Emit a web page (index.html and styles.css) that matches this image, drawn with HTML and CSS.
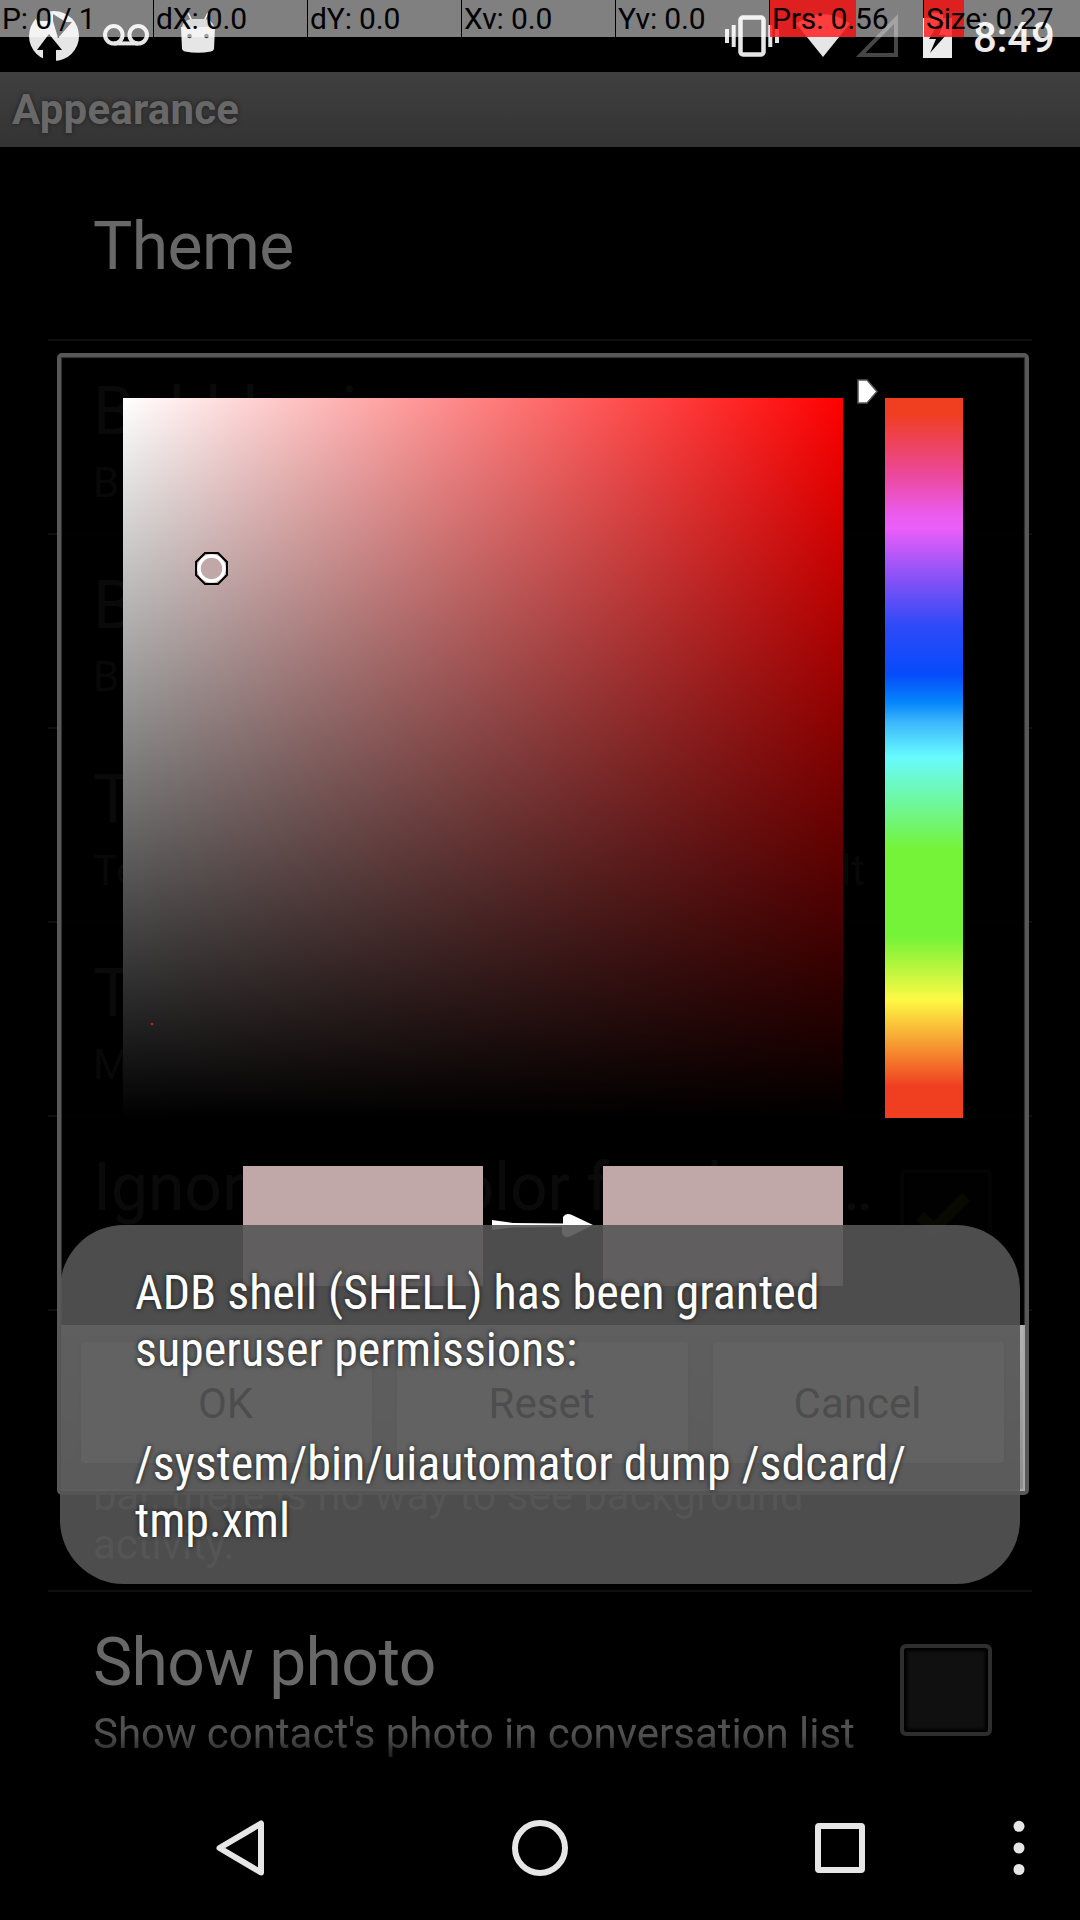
FILE: index.html
```html
<!DOCTYPE html>
<html lang="en">
<head>
<meta charset="utf-8">
<title>Appearance</title>
<link rel="stylesheet" href="styles.css">
</head>
<body>
<div class="screen">
  <header class="status">
    <svg class="ic-recovery" width="50" height="50" viewBox="0 0 50 50"><circle cx="25" cy="25" r="25" fill="#e6e6e6"/><path d="M20 23L33 39H27V50H14V39H8ZM8 10H19V0H13L6 6ZM24 10L29 27L43 11H37L24 3Z" fill="#000"/></svg>
    <svg class="ic-voicemail" width="46" height="22" viewBox="0 0 46 22"><g fill="none" stroke="#e6e6e6" stroke-width="4"><circle cx="10.8" cy="10.8" r="8.8"/><circle cx="35.2" cy="10.8" r="8.8"/><path d="M10.8 19.4H35.2"/></g></svg>
    <svg class="ic-android" width="34" height="42" viewBox="0 0 34 42"><path d="M7 1L11 9M27 1L23 9" stroke="#e6e6e6" stroke-width="1.6"/><path d="M1 15Q3 7 12 7H22Q31 7 33 15Z" fill="#b8b8b8"/><path d="M0 15H34L33 37Q32 39 30 39.500Q17 42 4 39.500Q2 39 1 37Z" fill="#e6e6e6"/><circle cx="8.500" cy="24" r="2.300" fill="#444"/><circle cx="25.500" cy="24" r="2.300" fill="#444"/></svg>
    <span class="spacer"></span>
    <svg class="ic-vibrate" width="54" height="42" viewBox="0 0 54 42"><rect x="15.500" y="2.500" width="23" height="37" rx="2.500" fill="none" stroke="#e6e6e6" stroke-width="4.500"/><path d="M2 14V28M8.700 10V32M45.300 10V32M52 14V28" stroke="#e6e6e6" stroke-width="4"/></svg>
    <svg class="ic-wifi" width="54" height="43" viewBox="0 0 54 43"><path d="M27 43L0 9.500Q27 -9 54 9.500Z" fill="#e6e6e6"/></svg>
    <svg class="ic-signal" width="42" height="43" viewBox="0 0 42 43"><path fill-rule="evenodd" d="M42 0V43H0ZM38 10L9.500 39H38Z" fill="#464646"/></svg>
    <svg class="ic-battery" width="29" height="45" viewBox="0 0 29 45"><path d="M9 0H20V5H29V45H0V5H9Z" fill="#ebebeb"/><path d="M16 9L6 26H13L7 40L23 22H16L21 9Z" fill="#000"/></svg>
    <span class="clock">8:49</span>
  </header>
  <div class="titlebar">Appearance</div>
  <main class="list">
    <section class="row single"><h2>Theme</h2></section>
    <section class="row"><h2>Bubbles in</h2><p>B</p></section>
    <section class="row"><h2>B</h2><p>B</p></section>
    <section class="row"><h2>T</h2><p class="spread"><span>Te</span><span>lt</span></p></section>
    <section class="row"><h2>T</h2><p>M</p></section>
    <section class="row check"><div><h2 class="long">Ignore text color for the c…</h2><p>Ignore text color out of the</p></div>
      <span class="box"><svg width="60" height="48" viewBox="0 0 60 48"><path d="M4 25L18 38L50 6" fill="none" stroke="#55660c" stroke-width="11"/></svg></span></section>
    <section class="row tall"><p>bar, there is no way to see background<br>activity.</p></section>
    <section class="row check"><div><h2>Show photo</h2><p>Show contact's photo in conversation list</p></div><span class="box"></span></section>
  </main>
  <nav class="navbar">
    <svg width="48" height="56" viewBox="0 0 48 56"><path d="M45 3.500V52.500L3.500 28Z" fill="none" stroke="#e6e6e6" stroke-width="6" stroke-linejoin="round"/></svg>
    <svg width="56" height="56" viewBox="0 0 56 56"><circle cx="28" cy="28" r="25" fill="none" stroke="#e6e6e6" stroke-width="6"/></svg>
    <svg width="50" height="50" viewBox="0 0 50 50"><rect x="3" y="3" width="44" height="44" rx="1" fill="none" stroke="#e6e6e6" stroke-width="6"/></svg>
    <svg width="12" height="56" viewBox="0 0 12 56"><g fill="#e6e6e6"><circle cx="6" cy="6.300" r="5.500"/><circle cx="6" cy="28" r="5.500"/><circle cx="6" cy="49.500" r="5.500"/></g></svg>
  </nav>

  <div class="dialog">
    <div class="picker">
      <div class="satval">
        <svg class="target" width="33" height="33" viewBox="0 0 33 33"><path d="M10 1H23L32 10V23L23 32H10L1 23V10Z" fill="#c0a8a8" stroke="#000" stroke-width="2"/><circle cx="16.500" cy="16.500" r="12.500" fill="none" stroke="#fff" stroke-width="3.500"/></svg>
        <span class="dot"></span>
      </div>
      <div class="hue">
        <svg class="cursor" width="22" height="27" viewBox="0 0 22 27"><path d="M2 2H11L21 13.500L11 25H2Z" fill="#fff" stroke="#555" stroke-width="1.500"/></svg>
      </div>
    </div>
    <div class="swatches">
      <span class="swatch"></span>
      <svg width="120" height="120" viewBox="0 0 120 120"><path d="M9 54L30 57L80 57.500V51Q83 46 89 49L110 59L88 70Q81 73 79 67V61L30 61.500L9 64Z" fill="#fff"/></svg>
      <span class="swatch"></span>
    </div>
    <div class="buttons"><span>OK</span><span>Reset</span><span>Cancel</span></div>
  </div>

  <div class="toast"><p>ADB shell (SHELL) has been granted<br>superuser permissions:<br><br>/system/bin/uiautomator dump /sdcard/<br>tmp.xml</p></div>

  <div class="pointer">
    <span>P: 0 / 1</span><span>dX: 0.0</span><span>dY: 0.0</span><span>Xv: 0.0</span><span>Yv: 0.0</span><span class="prs">Prs: 0.56</span><span class="size">Size: 0.27</span>
  </div>
</div>
</body>
</html>
```
FILE: styles.css
```css
* { box-sizing: border-box; margin: 0; padding: 0; }
body { background: #000; }
svg { display: block; flex: none; }
.screen { position: relative; width: 1080px; height: 1920px; overflow: hidden; background: #000; font-family: Roboto, sans-serif; display: flex; flex-direction: column; }

.status { height: 72px; flex: none; display: flex; align-items: flex-start; padding: 0 27px 0 29px; }
.ic-recovery { margin-top: 11px; }
.ic-voicemail { margin: 24px 0 0 24px; }
.ic-android { margin: 12px 0 0 32px; }
.spacer { flex: 1; }
.ic-vibrate { margin-top: 15px; }
.ic-wifi { margin: 14px 0 0 17px; }
.ic-signal { margin: 14px 0 0 6px; }
.ic-battery { margin: 13px 22px 0 25px; }
.clock { width: 79px; margin-top: 13px; color: #ebebeb; font-size: 42px; line-height: 50px; font-weight: 500; letter-spacing: -.3px; white-space: nowrap; text-indent: -1px; }

.titlebar { height: 75px; flex: none; padding: 0 12px; background: linear-gradient(#404040, #333); color: #686868; font-size: 42px; font-weight: 700; line-height: 76px; letter-spacing: .2px; text-shadow: 0 0 4px #1c1c1c; }

.list { height: 1629px; flex: none; overflow: hidden; padding: 0 48px; -webkit-mask-image: linear-gradient(#000 1588px, transparent 1624px); mask-image: linear-gradient(#000 1588px, transparent 1624px); }
.row { height: 194px; padding: 32px 40px 0 45px; border-bottom: 2px solid #0f0f0f; }
.row h2 { font-size: 66px; line-height: 77px; font-weight: 400; letter-spacing: -.6px; color: #686868; white-space: nowrap; }
.row h2.long { letter-spacing: -.05px; }
.row p { margin-top: 8px; font-size: 42px; line-height: 49px; letter-spacing: -.03px; color: #505050; white-space: nowrap; }
.row.single { padding-top: 61px; }
.row .spread { display: flex; justify-content: space-between; padding-right: 127px; }
.row.check { display: flex; justify-content: space-between; }
.row.check > div { width: 0; }
.row.tall { height: 281px; padding-top: 152px; }
.box { flex: none; width: 92px; height: 92px; margin-top: 20px; border: 4px solid #2e2e2e; border-radius: 6px; background: #101010; box-shadow: inset 0 0 3px 3px #000; display: flex; align-items: center; justify-content: center; }

.navbar { height: 144px; flex: none; display: flex; align-items: center; padding-left: 216px; }
.navbar svg:nth-child(2) { margin-left: 248px; }
.navbar svg:nth-child(3) { margin-left: 247px; }
.navbar svg:nth-child(4) { margin-left: 148px; }

.dialog { position: absolute; left: 57px; top: 353px; width: 972px; height: 1142px; border: 4px solid #585858; border-radius: 5px; background: rgba(0, 0, 0, .9); box-shadow: inset 0 0 1px 1px #333; padding-top: 41px; }
.picker { display: flex; gap: 42px; padding-left: 62px; }
.satval { position: relative; width: 720px; height: 720px; background: linear-gradient(to bottom, transparent, #000), linear-gradient(to right, #fff, #f00); }
.target { position: absolute; left: 72px; top: 154px; }
.dot { position: absolute; left: 28px; top: 625px; width: 2px; height: 2px; background: #f00; }
.hue { position: relative; width: 78px; height: 720px; background: linear-gradient(#f03e20 0, #f03e20 16px, #ec4898 75px, #ea5cf0 118px, #eb5ef9 130px, #7850f6 188px, #2c4af8 229px, #204afa 245px, #064bfa 276px, #0587fb 305px, #3ab4fc 323px, #68fbfd 359px, #75f338 452px, #75f338 539px, #fef944 602px, #ef3e20 689px, #ef3e20); }
.cursor { position: absolute; left: -29px; top: -20px; }
.swatches { display: flex; margin-top: 48px; padding-left: 182px; }
.swatch { width: 240px; height: 120px; background: #c0a8a8; }
.buttons { display: flex; gap: 25px; height: 166px; margin-top: 39px; padding: 17px 21px 28px 20px; background: linear-gradient(#b4b4b4, #8c8c8c); box-shadow: inset -2px -2px 1px #aaa; }
.buttons span { flex: 1; padding: 1px 2px 0 0; border-radius: 4px; background: #d8d8d8; box-shadow: 0 1px 4px #777; color: #000; text-align: center; font-size: 42px; line-height: 121px; }

.toast { position: absolute; left: 60px; top: 1225px; width: 960px; height: 359px; padding: 39px 74px 0 75px; border-radius: 64px; background: rgba(85, 85, 85, .9); color: #fff; }
.toast p { font-family: "Roboto Condensed", Roboto, sans-serif; font-stretch: 75%; font-size: 48px; line-height: 57px; white-space: nowrap; text-shadow: 0 0 5px rgba(0, 0, 0, .75); }

.pointer { position: absolute; left: 0; top: 0; width: 1080px; height: 37px; display: grid; grid-template-columns: repeat(7, 153px); column-gap: 1px; }
.pointer span { height: 37px; padding-left: 2px; background: rgba(255, 255, 255, .5); color: #000; font-size: 30px; line-height: 37px; letter-spacing: -.15px; white-space: nowrap; }
.pointer .prs { background: linear-gradient(to right, rgba(255, 0, 0, .75) 86px, transparent 86px), rgba(255, 255, 255, .5); }
.pointer .size { width: 156px; background: linear-gradient(to right, rgba(255, 0, 0, .75) 40px, transparent 40px), rgba(255, 255, 255, .5); }
```
